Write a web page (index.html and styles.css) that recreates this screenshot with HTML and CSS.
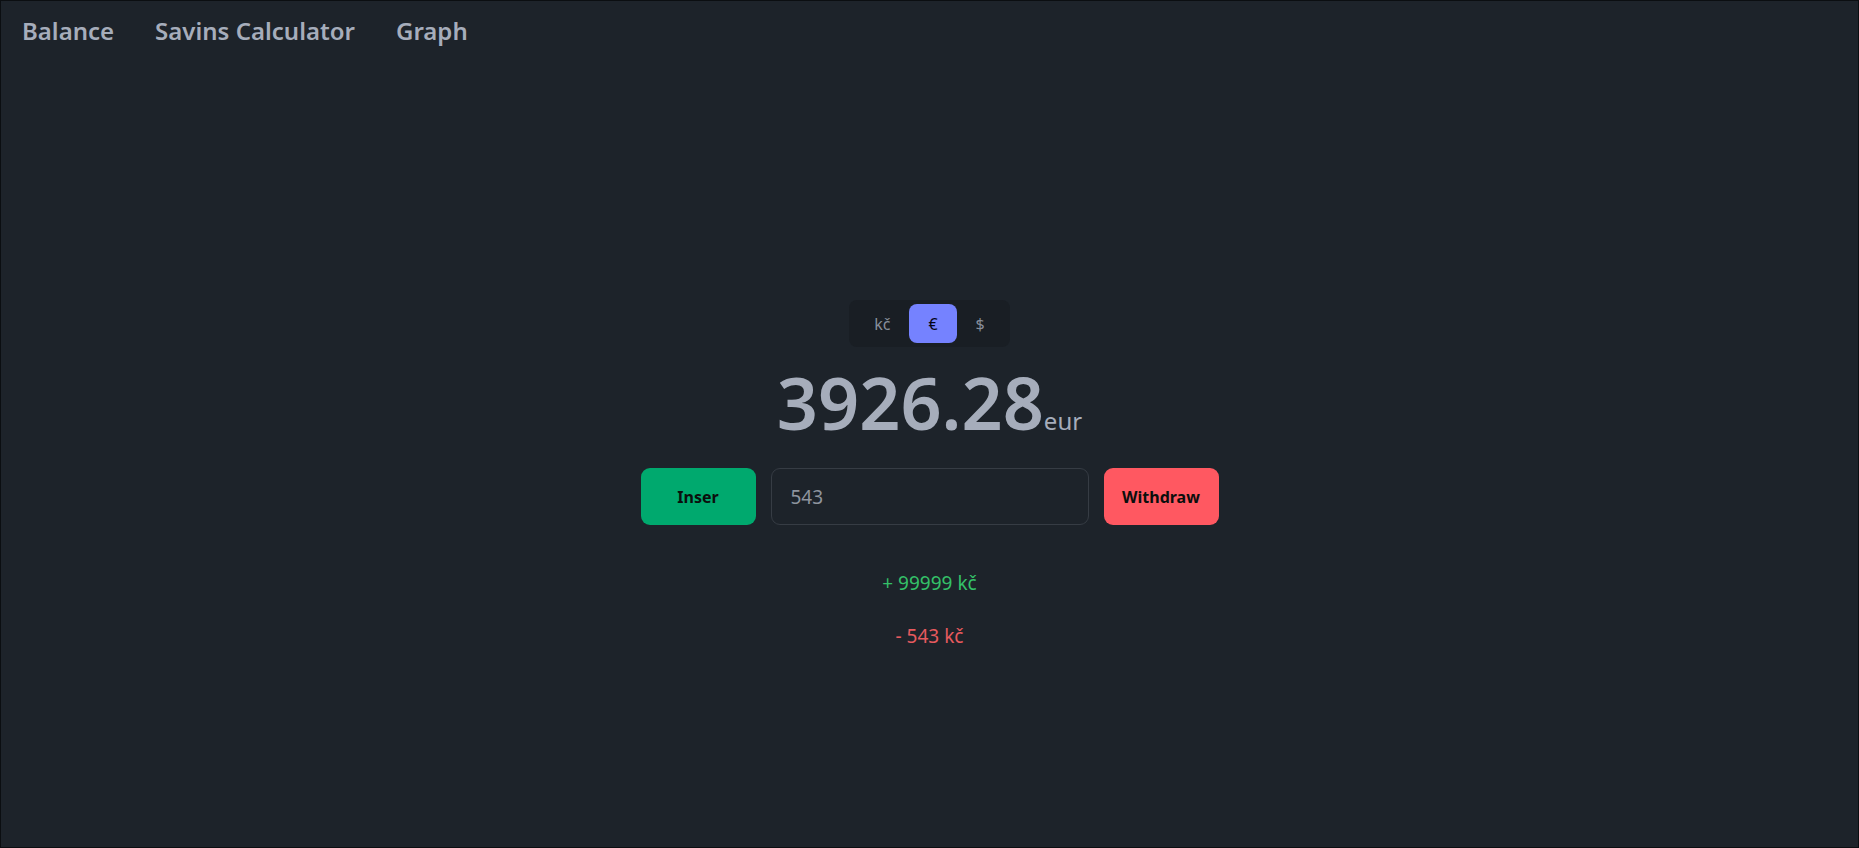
FILE: index.html
```html
<!DOCTYPE html>
<html lang="en">
<head>
<meta charset="utf-8">
<title>Balance</title>
<link rel="stylesheet" href="styles.css">
</head>
<body>
<div class="app">
  <nav class="nav">
    <a class="nav-link" href="#">Balance</a>
    <a class="nav-link" href="#">Savins Calculator</a>
    <a class="nav-link" href="#">Graph</a>
  </nav>
  <main class="main">
    <div class="tabs">
      <button class="tab">kč</button>
      <button class="tab tab-active">€</button>
      <button class="tab">$</button>
    </div>
    <div class="balance"><span class="amount">3926.28</span><span class="unit">eur</span></div>
    <div class="actions">
      <button class="btn btn-insert">Inser</button>
      <input class="amount-input" type="text" value="543">
      <button class="btn btn-withdraw">Withdraw</button>
    </div>
    <ul class="history">
      <li class="entry entry-plus">+ 99999 kč</li>
      <li class="entry entry-minus">- 543 kč</li>
    </ul>
  </main>
</div>
</body>
</html>
```
FILE: styles.css
```css
* { box-sizing: border-box; }
html, body {
  margin: 0;
  padding: 0;
  height: 100%;
}
body {
  background: #1d232a;
  color: #a6adbb;
  font-family: "Noto Sans", "Open Sans", sans-serif;
}
.app {
  height: 100vh;
  border: 1px solid #0b0e11;
  display: flex;
  flex-direction: column;
}
.nav {
  display: flex;
  gap: 41px;
  padding: 14px 21px 0;
}
.nav-link {
  font-size: 24px;
  line-height: 32px;
  font-weight: 600;
  color: #a6adbb;
  text-decoration: none;
}
.main {
  display: flex;
  flex-direction: column;
  align-items: center;
  padding-top: 253px;
}
.tabs {
  display: flex;
  background: #191e24;
  border-radius: 8px;
  padding: 4px 6px;
}
.tab {
  height: 39px;
  padding: 0 19px;
  border: 0;
  border-radius: 8px;
  background: transparent;
  color: rgba(166, 173, 187, 0.8);
  font-family: inherit;
  font-size: 16px;
}
.tab-active {
  background: #7582ff;
  color: #050617;
}
.balance {
  margin-top: 19px;
  display: flex;
  align-items: baseline;
}
.amount {
  font-size: 72px;
  line-height: 72px;
  font-weight: 600;
}
.unit {
  font-size: 24px;
}
.actions {
  margin-top: 30px;
  display: flex;
  gap: 15px;
}
.btn {
  width: 115px;
  height: 57px;
  border: 0;
  border-radius: 9px;
  font-family: inherit;
  font-size: 16px;
  font-weight: 700;
  color: #0b0f0d;
}
.btn-insert { background: #00a96e; }
.btn-withdraw { background: #ff5861; }
.amount-input {
  width: 318px;
  height: 57px;
  border: 1px solid #363c44;
  border-radius: 9px;
  background: #1d232a;
  color: #8e949e;
  font-family: inherit;
  font-size: 19px;
  padding: 0 19px;
  outline: none;
}
.history {
  list-style: none;
  margin: 44px 0 0;
  padding: 0;
  display: flex;
  flex-direction: column;
  align-items: center;
  gap: 25px;
}
.entry {
  font-size: 19px;
  line-height: 28px;
}
.entry-plus { color: #34c068; }
.entry-minus { color: #e65a5e; }
```
